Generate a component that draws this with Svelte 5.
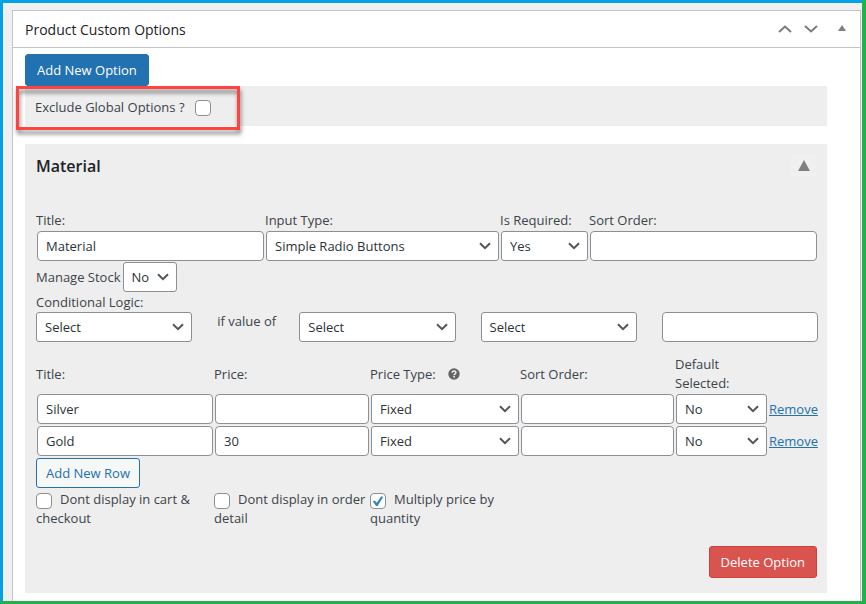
<script lang="ts">
	type Row = { title: string; price: string; priceType: string; sortOrder: string; selected: string };

	let excludeGlobal = false;
	let option = { title: 'Material', inputType: 'Simple Radio Buttons', required: 'Yes', sortOrder: '' };
	let manageStock = 'No';
	let rows: Row[] = [
		{ title: 'Silver', price: '', priceType: 'Fixed', sortOrder: '', selected: 'No' },
		{ title: 'Gold', price: '30', priceType: 'Fixed', sortOrder: '', selected: 'No' }
	];
	let flags = [
		{ label: 'Dont display in cart & checkout', checked: false },
		{ label: 'Dont display in order detail', checked: false },
		{ label: 'Multiply price by quantity', checked: true }
	];

	const addRow = () => {
		rows = [...rows, { title: '', price: '', priceType: 'Fixed', sortOrder: '', selected: 'No' }];
	};
	const removeRow = (i: number) => {
		rows = rows.filter((_, index) => index !== i);
	};
</script>

<div class="frame">
	<div class="page">
		<section class="postbox">
			<header>
				<h2>Product Custom Options</h2>
				<div class="handles">
					<button class="handle" aria-label="Move up">
						<svg width="14" height="8" viewBox="0 0 14 8"><path d="M1 7l6-5.4L13 7" /></svg>
					</button>
					<button class="handle" aria-label="Move down">
						<svg width="14" height="8" viewBox="0 0 14 8"><path d="M1 1l6 5.4L13 1" /></svg>
					</button>
					<button class="handle toggle" aria-label="Toggle panel">
						<svg width="8" height="8" viewBox="0 0 8 8"><polygon points="4,0 8,6 0,6" /></svg>
					</button>
				</div>
			</header>

			<div class="inside">
				<button class="primary">Add New Option</button>

				<div class="exclude">
					<label for="exclude">Exclude Global Options ?</label>
					<input id="exclude" type="checkbox" bind:checked={excludeGlobal} />
					<div class="highlight"></div>
				</div>

				<div class="option">
					<div class="option-head">
						<h3>Material</h3>
						<button class="collapse" aria-label="Collapse option">
							<svg width="12" height="11" viewBox="0 0 12 11"><polygon points="6,0 12,11 0,11" /></svg>
						</button>
					</div>

					<div class="fields">
						<div>
							<label for="title">Title:</label>
							<input id="title" type="text" bind:value={option.title} />
						</div>
						<div>
							<label for="input-type">Input Type:</label>
							<select id="input-type" bind:value={option.inputType}>
								<option>Simple Radio Buttons</option>
							</select>
						</div>
						<div>
							<label for="required">Is Required:</label>
							<select id="required" bind:value={option.required}>
								<option>Yes</option>
								<option>No</option>
							</select>
						</div>
						<div>
							<label for="sort-order">Sort Order:</label>
							<input id="sort-order" type="text" bind:value={option.sortOrder} />
						</div>
					</div>

					<div class="stock">
						<label for="stock">Manage Stock</label>
						<select id="stock" bind:value={manageStock}>
							<option>No</option>
							<option>Yes</option>
						</select>
					</div>

					<label class="logic-label" for="logic">Conditional Logic:</label>
					<div class="logic">
						<select id="logic"><option>Select</option></select>
						<span>if value of</span>
						<select aria-label="Option"><option>Select</option></select>
						<select aria-label="Condition"><option>Select</option></select>
						<input type="text" aria-label="Value" />
					</div>

					<table>
						<colgroup>
							<col />
							<col class="c-price" />
							<col class="c-type" />
							<col class="c-sort" />
							<col class="c-default" />
							<col class="c-remove" />
						</colgroup>
						<thead>
							<tr>
								<th>Title:</th>
								<th>Price:</th>
								<th>
									<span class="with-help">
										Price Type:
										<svg width="12" height="12" viewBox="0 0 12 12">
											<circle cx="6" cy="6" r="5.7" fill="#646464" />
											<path d="M4.2 4.7C4.2 2.4 7.9 2.4 7.9 4.6 7.9 5.9 6.1 5.8 6.1 7.2" fill="none" stroke="#eee" stroke-width="1.5" />
											<rect x="5.3" y="8" width="1.6" height="1.6" fill="#eee" />
										</svg>
									</span>
								</th>
								<th>Sort Order:</th>
								<th>Default Selected:</th>
								<th></th>
							</tr>
						</thead>
						<tbody>
							{#each rows as row, i}
								<tr>
									<td><input type="text" aria-label="Title" bind:value={row.title} /></td>
									<td><input type="text" aria-label="Price" bind:value={row.price} /></td>
									<td>
										<select aria-label="Price type" bind:value={row.priceType}>
											<option>Fixed</option>
										</select>
									</td>
									<td><input type="text" aria-label="Sort order" bind:value={row.sortOrder} /></td>
									<td>
										<select aria-label="Default selected" bind:value={row.selected}>
											<option>No</option>
											<option>Yes</option>
										</select>
									</td>
									<td><a href="#remove" on:click|preventDefault={() => removeRow(i)}>Remove</a></td>
								</tr>
							{/each}
						</tbody>
					</table>

					<button class="secondary" on:click={addRow}>Add New Row</button>

					<div class="flags">
						{#each flags as flag}
							<label><input type="checkbox" bind:checked={flag.checked} />{flag.label}</label>
						{/each}
					</div>

					<div class="actions">
						<button class="danger">Delete Option</button>
					</div>
				</div>
			</div>
		</section>
	</div>
</div>

<style>
	:global(body) {
		background: #f0f0f1;
	}

	.frame,
	.frame * {
		box-sizing: border-box;
	}

	.frame {
		display: flex;
		min-height: 100vh;
		border-right: 4px solid #22b14c;
		border-bottom: 3px solid #22b14c;
		font-family: 'Open Sans', 'Noto Sans', sans-serif;
		font-size: 13px;
		line-height: 19px;
		color: #3c434a;
	}

	.page {
		flex: 1;
		display: flex;
		padding: 7px 1px 0 9px;
		border-left: 3px solid #00a2e8;
		border-top: 3px solid #00a2e8;
	}

	.postbox {
		flex: 1;
		background: #fff;
		border: 1px solid #c3c4c7;
		border-bottom: none;
	}

	header {
		display: flex;
		justify-content: space-between;
		align-items: center;
		height: 37px;
		padding: 0 14px 0 12px;
		border-bottom: 1px solid #c3c4c7;
	}

	h2,
	h3 {
		margin: 0;
		color: #1d2327;
	}

	h2 {
		font-size: 14px;
		font-weight: 500;
	}

	h3 {
		font-size: 16px;
		line-height: 24px;
		font-weight: 600;
	}

	button {
		font: inherit;
		cursor: pointer;
	}

	.handles {
		display: flex;
		align-items: center;
		gap: 12px;
	}

	.handle {
		display: flex;
		padding: 0;
		border: none;
		background: none;
	}
	.handle path {
		fill: none;
		stroke: #787c82;
		stroke-width: 2;
	}
	.handle polygon,
	.collapse polygon {
		fill: #808080;
	}

	.toggle {
		margin-left: 8px;
	}

	.inside {
		padding: 6px 33px 8px 12px;
	}

	.primary,
	.danger {
		display: block;
		height: 32px;
		padding: 0 11px;
		border: 1px solid #2271b1;
		border-radius: 3px;
		background: #2271b1;
		color: #fff;
	}

	.danger {
		border-color: #d43f3a;
		background: #d9534f;
	}

	.exclude {
		position: relative;
		display: flex;
		align-items: center;
		gap: 10px;
		height: 40px;
		margin-bottom: 18px;
		padding: 3px 10px 0;
		background: #eee;
		font-weight: 500;
	}

	.highlight {
		position: absolute;
		top: 0;
		left: -9px;
		width: 224px;
		height: 44px;
		border: 3px solid #ff4242;
		filter: drop-shadow(1px 4px 2px rgba(0, 0, 0, 0.5));
		pointer-events: none;
	}

	.option {
		padding: 10px 9px 15px 11px;
		background: #eee;
	}

	.option-head {
		display: flex;
		justify-content: space-between;
		margin-bottom: 33px;
		padding-right: 2px;
	}

	.collapse {
		display: flex;
		align-items: center;
		justify-content: center;
		width: 25px;
		height: 22px;
		padding: 0;
		border: none;
		background: #f0f0f0;
	}

	input[type='text'],
	select {
		display: block;
		width: 100%;
		height: 30px;
		margin: 0;
		padding: 0 8px;
		border: 1px solid #8c8f94;
		border-radius: 4px;
		background: #fff;
		color: #2c3338;
		font: inherit;
	}

	select {
		appearance: none;
		padding-right: 24px;
		border-radius: 3px;
		background: #fff
			url("data:image/svg+xml,%3Csvg xmlns='http://www.w3.org/2000/svg' width='12' height='8' viewBox='0 0 12 8'%3E%3Cpath d='M1 1.2l5 5 5-5' fill='none' stroke='%23555' stroke-width='2'/%3E%3C/svg%3E")
			no-repeat right 7px center;
	}

	input[type='checkbox'] {
		appearance: none;
		width: 16px;
		height: 16px;
		margin: 0;
		border: 1px solid #8c8f94;
		border-radius: 4px;
		background: #fff;
	}
	input[type='checkbox']:checked {
		background: #fff
			url("data:image/svg+xml,%3Csvg xmlns='http://www.w3.org/2000/svg' width='12' height='12' viewBox='0 0 12 12'%3E%3Cpath d='M.8 6.4l2-1 2 2.3L9.3 1.3l1.9.7-5.6 9H4.2z' fill='%233582c4'/%3E%3C/svg%3E")
			no-repeat center;
	}

	.fields {
		display: grid;
		grid-template-columns: 229fr 235fr 89fr 229fr;
	}
	.fields > div {
		padding: 0 1px;
	}
	.fields label {
		display: block;
		height: 20px;
		margin-left: -1px;
		font-weight: 500;
		white-space: nowrap;
	}

	.stock {
		display: flex;
		align-items: center;
		gap: 2px;
		margin-top: 1px;
	}
	.stock select {
		width: 54px;
	}

	.logic-label {
		display: block;
		height: 20px;
		padding-top: 1px;
	}

	.logic {
		display: grid;
		grid-template-columns: 1fr 57px 1fr 1fr 1fr;
		gap: 25px;
	}
	.logic span {
		white-space: nowrap;
	}

	table {
		width: 100%;
		margin-top: 13px;
		border-collapse: collapse;
		table-layout: fixed;
	}

	.c-price {
		width: 156px;
	}
	.c-type {
		width: 150px;
	}
	.c-sort {
		width: 155px;
	}
	.c-default {
		width: 93px;
	}
	.c-remove {
		width: 50px;
	}

	th {
		padding: 0;
		text-align: left;
		font-weight: 500;
	}

	td {
		padding: 1px;
	}

	.with-help {
		display: flex;
		align-items: center;
		gap: 12px;
	}

	a {
		color: #2271b1;
	}

	.secondary {
		display: block;
		height: 30px;
		margin-top: 1px;
		padding: 0 9px;
		border: 1px solid #2271b1;
		border-radius: 3px;
		background: #f6f7f7;
		color: #2271b1;
	}

	.flags {
		display: grid;
		grid-template-columns: 178px 156px 150px;
		margin-top: 2px;
	}
	.flags input {
		margin-right: 8px;
		vertical-align: middle;
	}

	.actions {
		display: flex;
		justify-content: flex-end;
		margin-top: 18px;
		padding-right: 1px;
	}
</style>
